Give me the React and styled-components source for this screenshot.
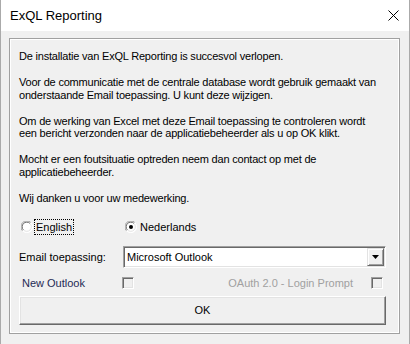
import React from "react";
import styled, { createGlobalStyle } from "styled-components";

const GlobalStyle = createGlobalStyle`
  html, body {
    margin: 0;
    padding: 0;
    background: #f0f0f0;
  }
  body {
    font-family: "Liberation Sans", Arial, sans-serif;
    font-size: 11px;
    color: #000;
  }
`;

const Window = styled.div`
  width: 410px;
  height: 344px;
  box-sizing: border-box;
  background: #f0f0f0;
  border-left: 1px solid #aaaaaa;
  border-right: 1px solid #aaaaaa;
  display: flex;
  flex-direction: column;
`;

const TitleBar = styled.div`
  height: 31px;
  flex: none;
  background: #fff;
  display: flex;
  align-items: center;
  justify-content: space-between;
  padding: 0 10px 0 9px;
  font-size: 13px;
`;

const CloseIcon = () => (
  <svg width="11" height="11" viewBox="0 0 11 11">
    <path d="M0.5 0.5 L10.5 10.5 M10.5 0.5 L0.5 10.5" stroke="#000" strokeWidth="1" />
  </svg>
);

const Frame = styled.div`
  margin: 7px 9px 0 8px;
  height: 296px;
  box-sizing: border-box;
  border: 1px solid #a0a0a0;
  box-shadow: inset 0 0 0 1px #fff;
  padding: 11px 13px 0 9px;
  display: flex;
  flex-direction: column;
`;

const Message = styled.div`
  line-height: 12.9px;
  white-space: nowrap;
  letter-spacing: -0.2px;
`;

const Para = styled.p`
  margin: 0 0 12.9px;
`;

const RadioRow = styled.div`
  display: flex;
  align-items: center;
  height: 16px;
  margin-top: 1px;
  padding-left: 2px;
`;

const RadioOption = styled.label`
  display: flex;
  align-items: center;
  width: ${(p) => p.$width || "auto"};
`;

const RadioLabel = styled.span`
  margin-left: 2px;
  padding: 0 1px;
  line-height: 14px;
  outline: ${(p) => (p.$focus ? "1px dotted #000" : "none")};
`;

const Radio = ({ checked }) => (
  <svg width="12" height="12" viewBox="0 0 12 12">
    <circle cx="6" cy="6" r="5.5" fill="#fff" />
    <path d="M1.6 9.9 A5.5 5.5 0 0 1 9.9 1.6" fill="none" stroke="#a0a0a0" strokeWidth="1" />
    <path d="M2.5 9 A4.3 4.3 0 0 1 9 2.5" fill="none" stroke="#696969" strokeWidth="1" />
    <path d="M9.9 1.6 A5.5 5.5 0 0 1 1.6 9.9" fill="none" stroke="#fff" strokeWidth="1" />
    <path d="M9 2.5 A4.3 4.3 0 0 1 2.5 9" fill="none" stroke="#e3e3e3" strokeWidth="1" />
    {checked && <circle cx="6" cy="6" r="2" fill="#000" />}
  </svg>
);

const FieldRow = styled.div`
  display: flex;
  align-items: center;
  margin-top: ${(p) => p.$gap || 0}px;
  padding-left: ${(p) => p.$indent || 0}px;
`;

const FieldLabel = styled.span`
  width: ${(p) => p.$width}px;
  flex: none;
  color: ${(p) => p.$color || "#000"};
`;

const Combo = styled.div`
  flex: 1;
  height: 22px;
  box-sizing: border-box;
  background: #fff;
  border: 1px solid;
  border-color: #a0a0a0 #fff #fff #a0a0a0;
  box-shadow: inset 1px 1px 0 #696969, inset -1px -1px 0 #e3e3e3;
  display: flex;
  align-items: center;
  padding: 1px 1px 1px 3px;
`;

const ComboText = styled.span`
  flex: 1;
`;

const DropButton = styled.div`
  width: 17px;
  height: 18px;
  box-sizing: border-box;
  background: #f0f0f0;
  border: 1px solid;
  border-color: #e3e3e3 #696969 #696969 #e3e3e3;
  box-shadow: inset 1px 1px 0 #fff, inset -1px -1px 0 #a0a0a0;
  display: flex;
  align-items: center;
  justify-content: center;
`;

const Arrow = () => (
  <svg width="7" height="4" viewBox="0 0 7 4">
    <path d="M0 0 H7 L3.5 4 Z" fill="#000" />
  </svg>
);

const CheckBox = styled.span`
  width: 12px;
  height: 12px;
  flex: none;
  box-sizing: border-box;
  border: 1px solid;
  border-color: #a0a0a0 #fff #fff #a0a0a0;
  box-shadow: inset 1px 1px 0 #696969, inset -1px -1px 0 #e3e3e3;
  background: #f0f0f0;
  margin-right: ${(p) => p.$mr || 0}px;
`;

const Spacer = styled.div`
  flex: 1;
`;

const DisabledLabel = styled.span`
  color: #a0a0a0;
  margin-right: 18px;
`;

const OkButton = styled.button`
  margin-top: 7px;
  height: 29px;
  width: 100%;
  box-sizing: border-box;
  background: #f0f0f0;
  border: 1px solid;
  border-color: #fff #696969 #696969 #fff;
  box-shadow: inset -1px -1px 0 #a0a0a0, inset 1px 1px 0 #e3e3e3;
  font-family: inherit;
  font-size: 11px;
  color: #000;
  padding: 0;
`;

export default function App() {
  return (
    <Window>
      <GlobalStyle />
      <TitleBar>
        <span>ExQL Reporting</span>
        <CloseIcon />
      </TitleBar>
      <Frame>
        <Message>
          <Para>De installatie van ExQL Reporting is succesvol verlopen.</Para>
          <Para>
            Voor de communicatie met de centrale database wordt gebruik gemaakt van
            <br />
            onderstaande Email toepassing. U kunt deze wijzigen.
          </Para>
          <Para>
            Om de werking van Excel met deze Email toepassing te controleren wordt
            <br />
            een bericht verzonden naar de applicatiebeheerder als u op OK klikt.
          </Para>
          <Para>
            Mocht er een foutsituatie optreden neem dan contact op met de
            <br />
            applicatiebeheerder.
          </Para>
          <Para>Wij danken u voor uw medewerking.</Para>
        </Message>
        <RadioRow>
          <RadioOption $width="104px">
            <Radio />
            <RadioLabel $focus>English</RadioLabel>
          </RadioOption>
          <RadioOption>
            <Radio checked />
            <RadioLabel>Nederlands</RadioLabel>
          </RadioOption>
        </RadioRow>
        <FieldRow $gap={11}>
          <FieldLabel $width={104}>Email toepassing:</FieldLabel>
          <Combo>
            <ComboText>Microsoft Outlook</ComboText>
            <DropButton>
              <Arrow />
            </DropButton>
          </Combo>
        </FieldRow>
        <FieldRow $gap={9} $indent={3}>
          <FieldLabel $width={100} $color="#1f2a55">
            New Outlook
          </FieldLabel>
          <CheckBox />
          <Spacer />
          <DisabledLabel>OAuth 2.0 - Login Prompt</DisabledLabel>
          <CheckBox $mr={3} />
        </FieldRow>
        <OkButton>OK</OkButton>
      </Frame>
    </Window>
  );
}
